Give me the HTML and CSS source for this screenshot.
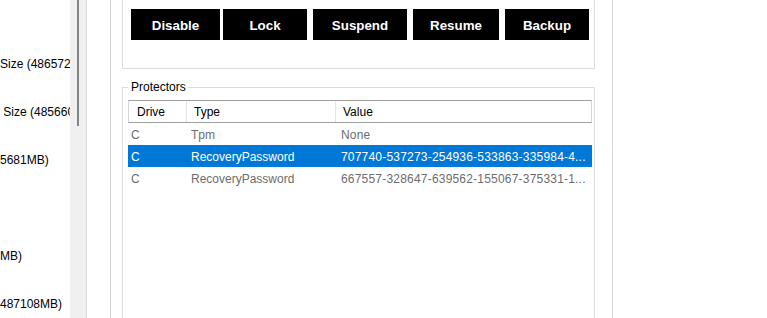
FILE: index.html
```html
<!DOCTYPE html>
<html>
<head>
<meta charset="utf-8">
<link rel="stylesheet" href="styles.css">
</head>
<body>
<div class="app">
  <div class="tree">
    <div class="line"></div>
    <div class="line"></div>
    <div class="line">Size (486572MB)</div>
    <div class="line"></div>
    <div class="line"> Size (485660MB)</div>
    <div class="line"></div>
    <div class="line">5681MB)</div>
    <div class="line"></div>
    <div class="line"></div>
    <div class="line"></div>
    <div class="line">MB)</div>
    <div class="line"></div>
    <div class="line">487108MB)</div>
  </div>
  <div class="vscroll"><div class="thumb"></div></div>
  <div class="gutter"></div>
  <div class="panel">
    <div class="actions">
      <button class="btn w89">Disable</button>
      <button class="btn w84 near">Lock</button>
      <button class="btn w94">Suspend</button>
      <button class="btn w86">Resume</button>
      <button class="btn w84">Backup</button>
    </div>
    <fieldset class="protectors">
      <legend>Protectors</legend>
      <div class="list">
        <div class="head">
          <div class="hc c1">Drive</div>
          <div class="hc c2">Type</div>
          <div class="hc c3">Value</div>
        </div>
        <div class="row">
          <div class="cell">C</div>
          <div class="cell">Tpm</div>
          <div class="cell value">None</div>
        </div>
        <div class="row selected">
          <div class="cell">C</div>
          <div class="cell">RecoveryPassword</div>
          <div class="cell value">707740-537273-254936-533863-335984-4...</div>
        </div>
        <div class="row">
          <div class="cell">C</div>
          <div class="cell">RecoveryPassword</div>
          <div class="cell value">667557-328647-639562-155067-375331-1...</div>
        </div>
      </div>
    </fieldset>
  </div>
  <div class="rest"></div>
</div>
</body>
</html>
```

FILE: styles.css
```css
html, body {
  margin: 0;
  padding: 0;
  background: #ffffff;
}
body {
  font-family: "Liberation Sans", Arial, sans-serif;
  font-size: 12px;
  color: #000;
  overflow: hidden;
}
.app {
  display: flex;
  height: 318px;
  overflow: hidden;
}
.tree {
  width: 70px;
  flex: none;
  overflow: hidden;
  padding-top: 4px;
}
.line {
  height: 24px;
  line-height: 24px;
  white-space: pre;
  color: #000;
}
.vscroll {
  width: 16px;
  flex: none;
  background: #f0f0f0;
  border-right: 1px solid #d9d9d9;
}
.thumb {
  width: 2px;
  height: 126px;
  margin-left: 7px;
  background: #858585;
}
.gutter {
  width: 23px;
  flex: none;
}
.panel {
  flex: none;
  border-left: 1px solid #d7d7d7;
  border-right: 1px solid #d7d7d7;
  padding: 0 17px 0 11px;
  box-sizing: border-box;
  width: 503px;
}
.actions {
  display: flex;
  border: 1px solid #dcdcdc;
  border-top: none;
  padding: 9px 0 28px 8px;
}
.btn {
  height: 31px;
  margin: 0 0 0 6px;
  padding: 2px 0 0 0;
  border: none;
  background: #000;
  color: #fff;
  font-family: "Liberation Sans", Arial, sans-serif;
  font-weight: bold;
  font-size: 13.33px;
}
.btn:first-child { margin-left: 0; }
.btn.near { margin-left: 3px; }
.w89 { width: 89px; }
.w84 { width: 84px; }
.w94 { width: 94px; }
.w86 { width: 86px; }
.protectors {
  margin: 10px 0 0 0;
  padding: 5px 2px 0 5px;
  border: 1px solid #dcdcdc;
  min-height: 260px;
}
.protectors legend {
  padding: 1px 2px 0 3px;
  font-size: 12px;
  line-height: 15px;
  color: #000;
}
.list {
  width: 464px;
}
.head {
  display: grid;
  grid-template-columns: 58px 149px 1fr;
  height: 21px;
  border-top: 1px solid #a0a0a0;
  border-bottom: 1px solid #a0a0a0;
  border-left: 1px solid #d5d5d5;
  border-right: 1px solid #d5d5d5;
}
.hc {
  padding-top: 2px;
  line-height: 19px;
  color: #000;
  white-space: nowrap;
  overflow: hidden;
}
.hc.c1 { padding-left: 8px; border-right: 1px solid #e3e3e3; }
.hc.c2 { padding-left: 7px; border-right: 1px solid #e3e3e3; }
.hc.c3 { padding-left: 7px; }
.row {
  display: grid;
  grid-template-columns: 60px 150px 1fr;
  height: 22px;
  color: #6d6d6d;
}
.cell {
  padding-left: 3px;
  padding-top: 2px;
  line-height: 20px;
  white-space: nowrap;
  overflow: hidden;
}
.cell.value {
  letter-spacing: 0.2px;
}
.row.selected {
  background: #0078d7;
  color: #fff;
}
.rest {
  flex: 1;
}
```
